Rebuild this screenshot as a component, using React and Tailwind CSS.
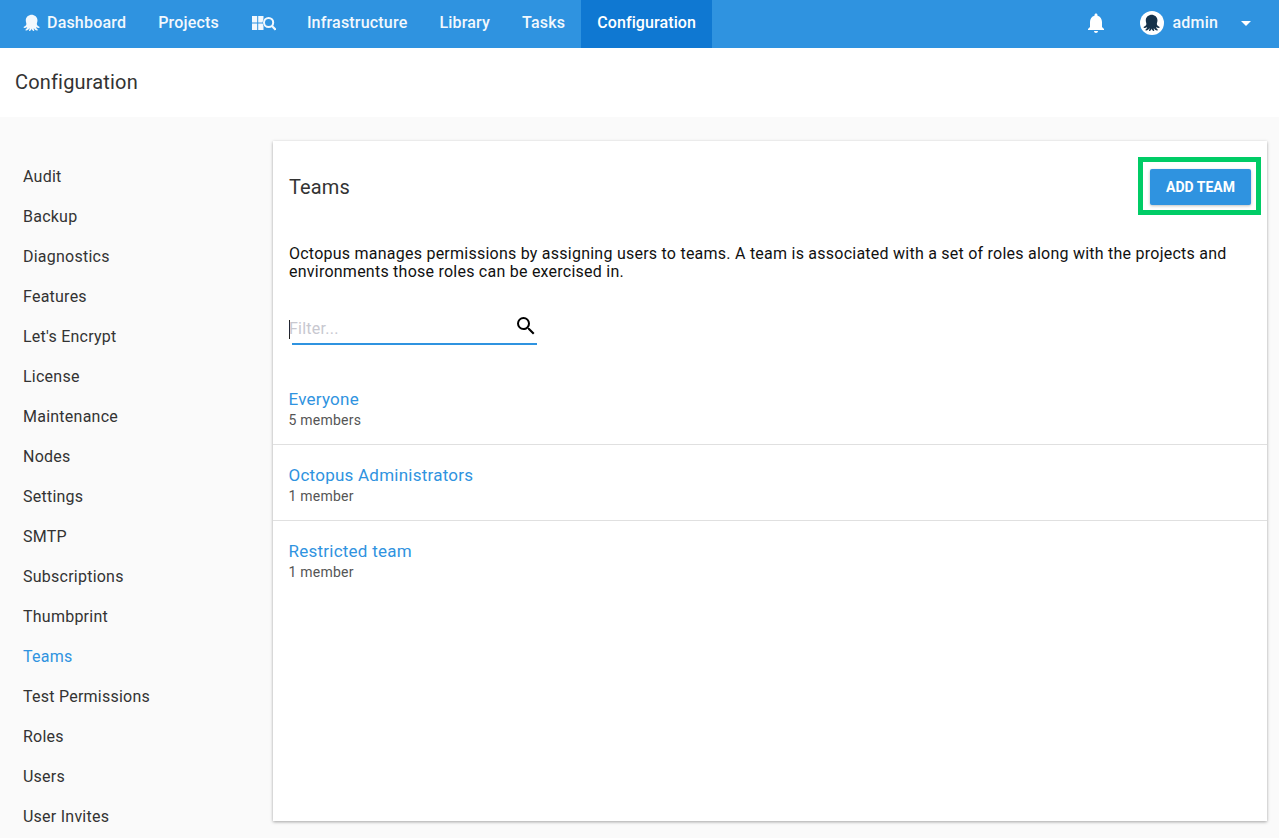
import { MdSearch } from "react-icons/md";

const sideLinks = [
  "Audit",
  "Backup",
  "Diagnostics",
  "Features",
  "Let's Encrypt",
  "License",
  "Maintenance",
  "Nodes",
  "Settings",
  "SMTP",
  "Subscriptions",
  "Thumbprint",
  "Teams",
  "Test Permissions",
  "Roles",
  "Users",
  "User Invites",
];

const teams = [
  { name: "Everyone", members: "5 members" },
  { name: "Octopus Administrators", members: "1 member" },
  { name: "Restricted team", members: "1 member" },
];

// Octopus logo
const Octopus = ({ className }) => (
  <svg viewBox="0 0 24 24" className={className} fill="currentColor">
    <path d="M12 1c-4.9 0-8.3 3.2-8.3 7.3 0 2.5 1 3.9.8 5.3-.2 1.5-1.6 2.6-3.2 3.5-.8.4-.6 1.4.4 1.4 1.6 0 2.9-.5 3.9-1.2-.2 1.5-1.1 2.7-2.1 3.5-.6.5-.2 1.4.7 1.3 2.1-.2 3.6-1.7 4.3-3.4.3 1.3.1 2.2-.4 3-.4.7.2 1.3 1 1 1.4-.5 2.1-1.9 2.4-3.2.3 1.3 1 2.7 2.4 3.2.8.3 1.4-.3 1-1-.5-.8-.7-1.7-.4-3 .7 1.7 2.2 3.2 4.3 3.4.9.1 1.3-.8.7-1.3-1-.8-1.9-2-2.1-3.5 1 .7 2.3 1.2 3.9 1.2 1 0 1.2-1 .4-1.4-1.6-.9-3-2-3.2-3.5-.2-1.4.8-2.8.8-5.3 0-4.1-3.4-7.3-8.3-7.3z" />
  </svg>
);

const NavLink = ({ children, active }) => (
  <a
    className={`flex h-12 items-center px-4 pb-[2px] text-[16px] font-medium ${
      active ? "bg-[#0f78d2] tracking-[0.1px] text-white" : "tracking-[0.19px] text-[#f2f8fd]"
    }`}
  >
    {children}
  </a>
);

const App = () => {
  return (
    <div className="flex h-[838px] flex-col overflow-hidden bg-[#fafafa] font-['Roboto',sans-serif] tracking-[0.24px] text-[#333]">
      {/* Top nav */}
      <nav className="flex h-12 shrink-0 items-center justify-between bg-[#2f93e0] pl-[7px] pr-[27px] text-white">
        <div className="flex">
          <NavLink>
            <Octopus className="mr-1.5 h-[18px] w-[18px]" />
            Dashboard
          </NavLink>
          <NavLink>Projects</NavLink>
          <NavLink>
            <svg viewBox="0 0 24 16" className="-mr-px ml-px h-4 w-6" fill="currentColor">
              <rect x="0" y="1" width="5.2" height="6.5" />
              <rect x="6.2" y="1" width="5.3" height="6.5" />
              <rect x="0" y="8.5" width="5.2" height="6.5" />
              <rect x="6.2" y="8.5" width="5.3" height="6.5" />
              <circle cx="16.6" cy="7.5" r="6" fill="#2f93e0" />
              <circle cx="16.6" cy="7.5" r="4.6" fill="none" stroke="currentColor" strokeWidth="2" />
              <path d="M20 11l3.6 3.6" stroke="currentColor" strokeWidth="2.2" />
            </svg>
          </NavLink>
          <NavLink>Infrastructure</NavLink>
          <NavLink>Library</NavLink>
          <NavLink>Tasks</NavLink>
          <NavLink active>Configuration</NavLink>
        </div>
        <div className="flex items-center pb-[2px]">
          <svg viewBox="0 0 24 24" className="h-6 w-6" fill="currentColor">
            <path d="M12 22c1.1 0 2-.9 2-2h-4c0 1.1.9 2 2 2zm6-6v-5c0-3.07-1.63-5.64-4.5-6.32V4c0-.83-.67-1.5-1.5-1.5s-1.5.67-1.5 1.5v.68C7.64 5.36 6 7.92 6 11v5l-2 2v1h16v-1l-2-2z" />
          </svg>
          <div className="ml-[32px] flex h-6 w-6 items-center justify-center rounded-full bg-white text-[#16324a]">
            <Octopus className="h-[18px] w-[18px]" />
          </div>
          <span className="ml-2 text-[16px] font-medium tracking-[0.19px] text-[#f2f8fd]">admin</span>
          <svg viewBox="0 0 10 5" className="ml-[22px] h-[5px] w-[12px]" fill="currentColor">
            <path d="M0 0l5 5 5-5z" />
          </svg>
        </div>
      </nav>

      {/* Page title */}
      <header className="flex h-[69px] shrink-0 items-center bg-white pb-[2px] pl-[15px] text-[20px] tracking-[0.17px] text-[#333]">
        Configuration
      </header>

      <div className="flex min-h-0 flex-1">
        {/* Side menu */}
        <aside className="w-[273px] shrink-0 pl-[23px] pt-[40px]">
          {sideLinks.map((link) => (
            <a
              key={link}
              className={`flex h-10 items-center text-[16px] ${
                link === "Teams" ? "text-[#2f93e0]" : "text-[#333]"
              }`}
            >
              {link}
            </a>
          ))}
        </aside>

        {/* Main card */}
        <main className="mb-[17px] ml-0 mr-3 mt-6 flex-1 bg-white shadow-[0_1px_3px_rgba(0,0,0,0.35)]">
          <div className="flex items-center justify-between pl-4 pr-4 pt-[28px]">
            <h1 className="text-[20px] font-normal leading-9 tracking-[0.1px] text-[#333]">Teams</h1>
            <div className="relative">
              <button className="h-9 w-[101px] rounded-[2px] bg-[#2f93e0] text-[14px] font-bold tracking-normal text-white shadow-[0_1px_3px_rgba(0,0,0,0.25)]">
                ADD TEAM
              </button>
              <div className="absolute -bottom-[10px] -left-3 -right-[10px] -top-3 border-[5px] border-[#00cc66]" />
            </div>
          </div>

          <p className="px-4 pt-[40px] text-[16px] leading-[18px] text-[#111]">
            Octopus manages permissions by assigning users to teams. A team is associated with a set of roles along with the projects and
            <br />
            environments those roles can be exercised in.
          </p>

          <div className="ml-[19px] mt-[27px] flex h-[37px] w-[245px] items-end border-b-2 border-[#2f93e0]">
            <span className="-ml-[3px] mb-1 h-[19px] w-px shrink-0 bg-[#222]" />
            <span className="-ml-px mb-[2px] flex-1 text-[16px] text-[#c8c8d0]">Filter...</span>
            <MdSearch className="-mr-px mb-[5px] h-6 w-6 text-black" />
          </div>

          <div className="mt-6">
            {teams.map((team, i) => (
              <div
                key={team.name}
                className={`h-[76px] pl-[15.5px] pr-4 pt-[18px] ${i < teams.length - 1 ? "border-b border-[#e0e0e0]" : ""}`}
              >
                <div className="text-[17px] leading-[24px] text-[#2f93e0]">{team.name}</div>
                <div className="text-[14px] leading-[18px] text-[#555]">{team.members}</div>
              </div>
            ))}
          </div>
        </main>
      </div>
    </div>
  );
};

export default App;
